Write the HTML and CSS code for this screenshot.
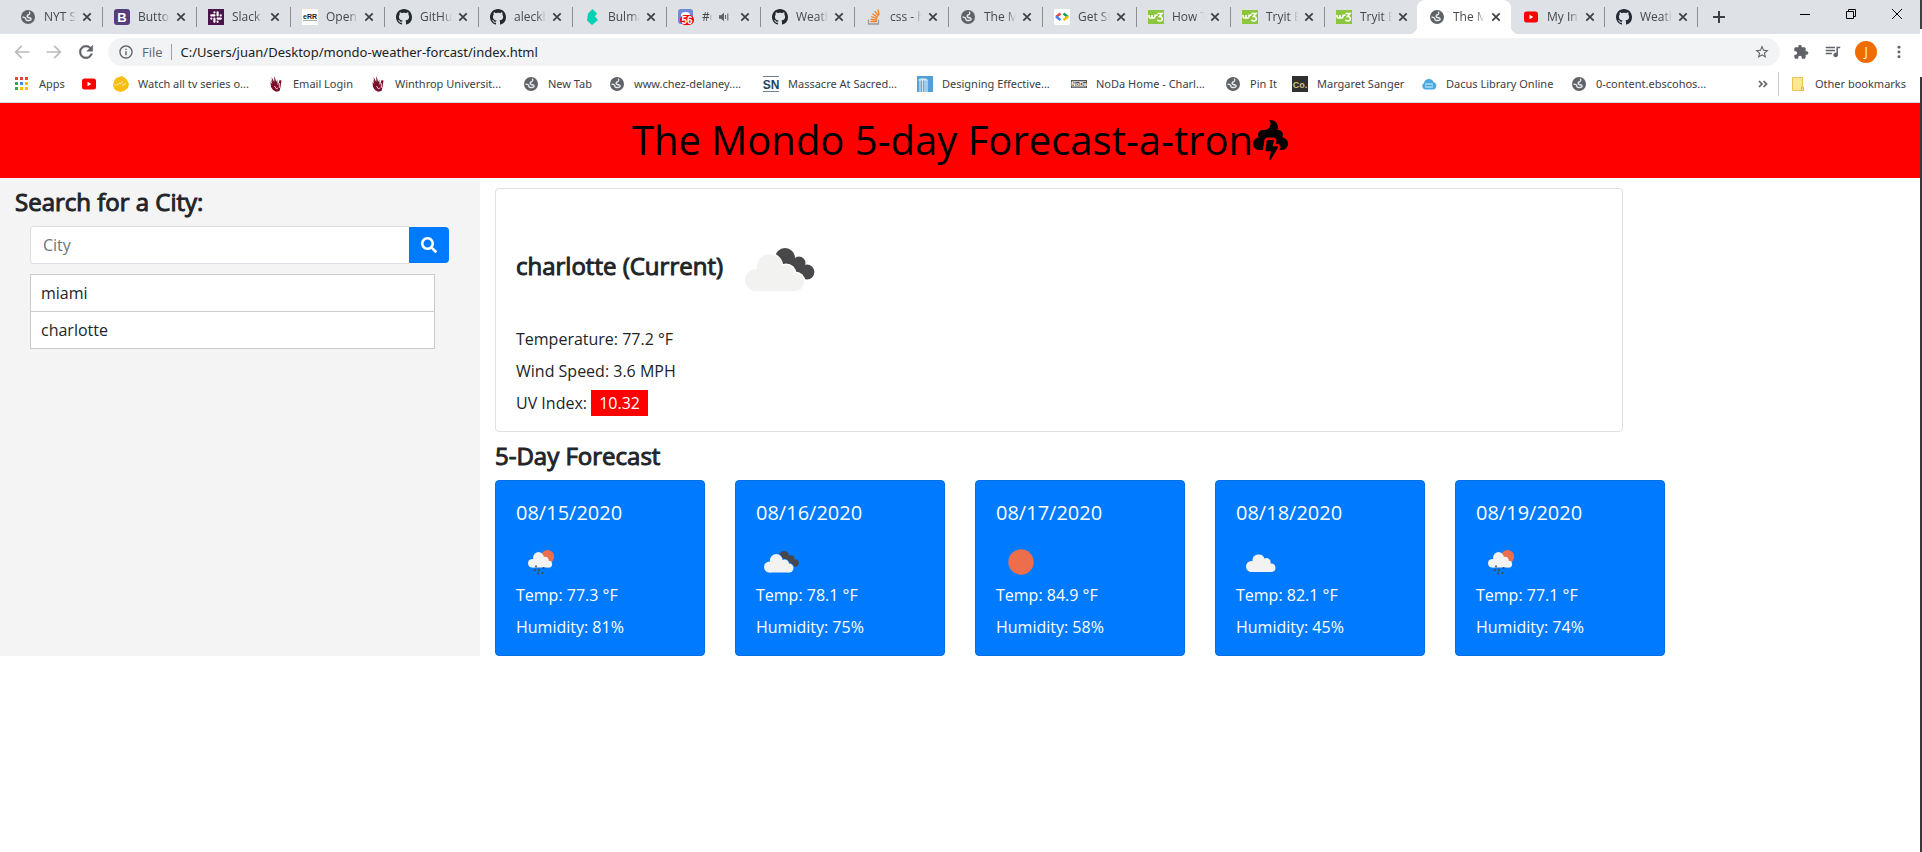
FILE: index.html
```html
<!DOCTYPE html>
<html lang="en">
<head>
<meta charset="utf-8">
<title>The Mondo 5-day Forecast-a-tron</title>
<link rel="stylesheet" href="styles.css">
</head>
<body>
<svg class="sprite" aria-hidden="true">
  <symbol id="globe" viewBox="0 0 16 16"><circle cx="8" cy="8" r="7" fill="#5f6368"/><path d="M2.600 7.800C3.400 8.600 5 8.300 5.600 9.200 6 10 5.600 10.800 6.500 11.200 8 11.600 9.800 11.800 10.800 10.800 11.700 9.800 10.600 8.800 9.300 8.700 8 8.600 7 8 7.200 6.800 7.400 5.600 9 6 9.600 5 9.900 4.200 9.200 3.400 9.800 2.700" fill="none" stroke="#e8eaed" stroke-width="1.400"/></symbol>
  <symbol id="github" viewBox="0 0 16 16"><path fill="#24292e" d="M8 0C3.580 0 0 3.580 0 8c0 3.540 2.290 6.530 5.470 7.590.4.070.55-.17.55-.38 0-.19-.01-.82-.01-1.490-2.010.37-2.530-.49-2.690-.94-.09-.23-.48-.94-.82-1.130-.28-.15-.68-.52-.01-.53.63-.01 1.080.58 1.230.82.72 1.210 1.870.87 2.330.66.070-.52.28-.87.51-1.070-1.780-.2-3.640-.89-3.640-3.950 0-.87.31-1.590.82-2.150-.08-.2-.36-1.020.08-2.120 0 0 .67-.21 2.200.82.64-.18 1.320-.27 2-.27s1.360.09 2 .27c1.530-1.040 2.200-.82 2.200-.82.44 1.100.16 1.920.08 2.120.51.56.82 1.270.82 2.150 0 3.070-1.870 3.750-3.650 3.950.29.25.54.73.54 1.480 0 1.070-.01 1.930-.01 2.200 0 .21.15.46.55.38A8.010 8.010 0 0 0 16 8c0-4.420-3.580-8-8-8z"/></symbol>
  <symbol id="bootstrap" viewBox="0 0 16 16"><rect width="16" height="16" rx="3" fill="#563d7c"/><text x="8" y="13" text-anchor="middle" font-family="Liberation Sans, sans-serif" font-weight="700" font-size="13" fill="#fff">B</text></symbol>
  <symbol id="slack" viewBox="0 0 16 16"><rect width="16" height="16" fill="#4a154b"/><path d="M9.600 3.300v3.100M9.600 9.600h3.200M6.400 9.700v3.100M3.300 6.400h3.100M6.400 3.300v.1M12.700 6.400h.1M9.600 12.700v.1M3.300 9.600h.1" stroke="#fff" stroke-width="2.200" stroke-linecap="round"/></symbol>
  <symbol id="open" viewBox="0 0 16 16"><rect width="16" height="16" fill="#fff"/><text x="8" y="10" text-anchor="middle" font-family="Liberation Sans, sans-serif" font-weight="700" font-size="7" fill="#222">eRR</text><path d="M1 11.500h14" stroke="#aaa"/></symbol>
  <symbol id="bulma" viewBox="0 0 16 16"><path fill="#00d1b2" d="M8.500 0l4.500 4.500-2 3 3 3.500-6 5-5-4.500 1-7z"/></symbol>
  <symbol id="discord" viewBox="0 0 16 16"><rect width="15" height="15" rx="3" fill="#7289da"/><path d="M3 6c0-2 1.500-3 4.500-3S12 4 12 6v3H3z" fill="#fff"/><rect x="2" y="6" width="14" height="10" rx="5" fill="#e00"/><text x="9" y="14.500" text-anchor="middle" font-family="Liberation Sans, sans-serif" font-weight="700" font-size="10" fill="#fff">56</text></symbol>
  <symbol id="stack" viewBox="0 0 16 16"><path d="M2.500 10.500V15h10v-4.500" fill="none" stroke="#9a9c9f" stroke-width="1.300"/><path d="M4.500 12.500h6.500M4.600 10.200l6.400.9M5.200 7.500l6 2.200M6.500 4.800l5.200 3.600M8.800 2.200l3.700 4.900M11.800.5l1.400 5.500" stroke="#f48024" stroke-width="1.300"/></symbol>
  <symbol id="code" viewBox="0 0 16 16"><rect width="16" height="16" rx="2" fill="#fff"/><g fill="none" stroke-width="2.400"><path d="M6.500 4.500L2 8" stroke="#ea4335"/><path d="M2 7.500l4.500 3.500" stroke="#4285f4"/><path d="M9.500 4.500L14 8" stroke="#0f9d58"/><path d="M14 7.500l-4.500 3.500" stroke="#fbbc05"/></g></symbol>
  <symbol id="w3" viewBox="0 0 16 16"><rect y="1" width="16" height="14" fill="#8cc63f"/><path d="M1 6v1.500c0 2 3 2 3 0V6v1.500c0 2 3 2 3 0V6.500l2.500-.5M9.500 4.500h4.500l-2.500 3c4 0 3.500 5 0 4.500-1 0-1.700-.5-2-1.300" fill="none" stroke="#fff" stroke-width="1.600"/></symbol>
  <symbol id="youtube" viewBox="0 0 16 16"><rect x="1" y="2.500" width="14" height="11" rx="2.500" fill="#f00"/><path d="M6.500 5.800v4.400L10.300 8z" fill="#fff"/></symbol>
  <symbol id="speaker" viewBox="0 0 12 12"><path d="M1 4.200h2L6 1.800v8.400L3 7.800H1z" fill="#5f6368"/><path d="M7.500 4v4M9.800 2.500v7" stroke="#5f6368"/></symbol>
  <symbol id="close" viewBox="0 0 10 10"><path d="M1.300 1.300l7.400 7.400M8.700 1.300L1.300 8.700" stroke="#3c4043" stroke-width="1.700"/></symbol>
  <symbol id="apps" viewBox="0 0 16 16"><g fill="#ea4335"><path d="M1 1h3v3H1zM6 1h3v3H6zM11 1h3v3h-3z"/></g><path fill="#34a853" d="M1 6h3v3H1zM1 11h3v3H1z"/><path fill="#4285f4" d="M6 6h3v3H6z"/><path fill="#fbbc05" d="M11 6h3v3h-3zM6 11h3v3H6zM11 11h3v3h-3z"/></symbol>
  <symbol id="watch" viewBox="0 0 16 16"><path d="M3 2l3-1 3-1 3 2 2 2 2 4-1 4-4 3-4 1-5-2-2-4 1-5z" fill="#f9bd0c"/><path d="M1.500 8.500c1 2 2-.5 2.500 0s1.500 0 2-1 1 1 2 0 1-2 2-2M9 9c1 1 2-2 4-1" fill="none" stroke="#fff" stroke-width=".8"/></symbol>
  <symbol id="eagle" viewBox="0 0 16 16"><path fill="#7b0f2b" d="M2.500 3l1.800 3-.8-5 2.800 5V0l2 6 .9-2.500.6 6L11.600 4l1.900.5-1 6.500-1 4-3.500.8-3-1.800-2-3-.5-5 1.800 2z"/><path d="M6.500 10l1.800 2.800 1.700-.8M11.300 7v5" fill="none" stroke="#fff" stroke-width=".8"/></symbol>
  <symbol id="sn" viewBox="0 0 16 16"><path d="M0 .5h16M0 15.500h16" stroke="#6c8196"/><text x="8" y="12.500" text-anchor="middle" font-family="Liberation Sans, sans-serif" font-weight="700" font-size="12" fill="#1d3f63">SN</text></symbol>
  <symbol id="design" viewBox="0 0 16 16"><rect width="16" height="16" fill="#559fd6"/><path d="M1 4.500c1-3 9-3 10 0z" fill="#d5e9f5"/><path d="M3 4v12M5.500 4v12M8 4v12M10 4v12" stroke="#d5e9f5" stroke-width="1.200"/></symbol>
  <symbol id="noda" viewBox="0 0 16 16"><rect y="4" width="16" height="8" fill="#555"/><path d="M1 5.500h14M1 10.800h14" stroke="#ddd" stroke-width=".8"/><text x="8" y="10.200" text-anchor="middle" font-family="Liberation Sans, sans-serif" font-weight="700" font-size="6" fill="#fff">NoDa</text></symbol>
  <symbol id="co" viewBox="0 0 16 16"><rect width="16" height="16" fill="#2f2f2f"/><text x="8" y="12" text-anchor="middle" font-family="Liberation Sans, sans-serif" font-size="9" font-weight="700" fill="#d9c37e">Co.</text></symbol>
  <symbol id="dacus" viewBox="0 0 16 16"><path fill="#4aa8df" d="M4 13.500a3.500 3.500 0 0 1-1-6.500 5 5 0 0 1 9.500-1 4 4 0 0 1 .5 7.500z"/><rect x="4" y="7" width="8" height="5" rx="1" fill="#8fd0f0"/><path d="M5 9.500h6" stroke="#4aa8df"/></symbol>
  <symbol id="folder" viewBox="0 0 16 16"><path d="M2.500 1.500h10v11h1v2h-11z" fill="#ffe693" stroke="#eac54f"/><path d="M11.500 11h2v3.500h-2z" fill="#ffe693" stroke="#e3b93a"/></symbol>

  <symbol id="broken" viewBox="0 0 100 100">
    <g fill="#48484a"><circle cx="56" cy="38" r="10"/><circle cx="70" cy="43" r="6.500"/><circle cx="78" cy="52" r="7.400"/><path d="M56 48l10-9 10 7 0 13-8-2z"/></g>
    <g class="cloud-gap"><circle cx="40" cy="47" r="14.400"/><circle cx="57" cy="54" r="10.500"/><circle cx="66" cy="62" r="10.500"/></g>
    <g fill="#f2f2f0"><circle cx="27" cy="60" r="11"/><circle cx="40.500" cy="47" r="12.800"/><circle cx="57" cy="54" r="9"/><circle cx="66" cy="62" r="9"/><path d="M27 55l20-5 19 8v13H27z"/></g>
  </symbol>
  <symbol id="rain" viewBox="0 0 50 46">
    <circle cx="31.500" cy="19.700" r="6.700" fill="#ec6e4c"/>
    <g fill="#f2f2f2"><circle cx="16.300" cy="26.300" r="4.300"/><circle cx="22.500" cy="20.500" r="5.400"/><circle cx="29" cy="23.500" r="3.700"/><circle cx="32.700" cy="27.200" r="3.400"/><path d="M16.300 24l8-2 8 3v5.600h-16z"/></g>
    <path d="M20 28.500v1.800M19.500 32l-1.300 2.300M23.500 32l-1.300 2.300M27.600 30v2M27 35l-1 2M22.500 35.500l-1 2" stroke="#48484a" stroke-width="1.600"/>
  </symbol>
  <symbol id="sun" viewBox="0 0 50 46"><circle cx="25" cy="25" r="12.700" fill="#ec6e4c"/></symbol>
  <symbol id="cloud" viewBox="0 0 50 46"><path fill="#f2f2f2" d="M15.500 35a5.400 5.400 0 0 1 0-11h1a6.200 6.200 0 0 1 12-2.500 4.300 4.300 0 0 1 6 5 4.300 4.300 0 0 1 1.300 8.500z"/></symbol>
</svg>

<div class="window">
  <div class="browser">
    <div class="tabstrip">
      <div class="tabs">
        <div class="tab"><svg class="ico"><use href="#globe"/></svg><span class="tab-title">NYT S</span><button class="tab-close" aria-label="Close tab"><svg><use href="#close"/></svg></button></div>
        <div class="tab"><svg class="ico"><use href="#bootstrap"/></svg><span class="tab-title">Butto</span><button class="tab-close" aria-label="Close tab"><svg><use href="#close"/></svg></button></div>
        <div class="tab"><svg class="ico"><use href="#slack"/></svg><span class="tab-title">Slack</span><button class="tab-close" aria-label="Close tab"><svg><use href="#close"/></svg></button></div>
        <div class="tab"><svg class="ico"><use href="#open"/></svg><span class="tab-title">Open</span><button class="tab-close" aria-label="Close tab"><svg><use href="#close"/></svg></button></div>
        <div class="tab"><svg class="ico"><use href="#github"/></svg><span class="tab-title">GitHu</span><button class="tab-close" aria-label="Close tab"><svg><use href="#close"/></svg></button></div>
        <div class="tab"><svg class="ico"><use href="#github"/></svg><span class="tab-title">aleckb</span><button class="tab-close" aria-label="Close tab"><svg><use href="#close"/></svg></button></div>
        <div class="tab"><svg class="ico"><use href="#bulma"/></svg><span class="tab-title">Bulma</span><button class="tab-close" aria-label="Close tab"><svg><use href="#close"/></svg></button></div>
        <div class="tab"><svg class="ico"><use href="#discord"/></svg><span class="tab-title audible">#c</span><svg class="speaker"><use href="#speaker"/></svg><button class="tab-close" aria-label="Close tab"><svg><use href="#close"/></svg></button></div>
        <div class="tab"><svg class="ico"><use href="#github"/></svg><span class="tab-title">Weath</span><button class="tab-close" aria-label="Close tab"><svg><use href="#close"/></svg></button></div>
        <div class="tab"><svg class="ico"><use href="#stack"/></svg><span class="tab-title">css - h</span><button class="tab-close" aria-label="Close tab"><svg><use href="#close"/></svg></button></div>
        <div class="tab"><svg class="ico"><use href="#globe"/></svg><span class="tab-title">The M</span><button class="tab-close" aria-label="Close tab"><svg><use href="#close"/></svg></button></div>
        <div class="tab"><svg class="ico"><use href="#code"/></svg><span class="tab-title">Get St</span><button class="tab-close" aria-label="Close tab"><svg><use href="#close"/></svg></button></div>
        <div class="tab"><svg class="ico"><use href="#w3"/></svg><span class="tab-title">How T</span><button class="tab-close" aria-label="Close tab"><svg><use href="#close"/></svg></button></div>
        <div class="tab"><svg class="ico"><use href="#w3"/></svg><span class="tab-title">Tryit E</span><button class="tab-close" aria-label="Close tab"><svg><use href="#close"/></svg></button></div>
        <div class="tab before-active"><svg class="ico"><use href="#w3"/></svg><span class="tab-title">Tryit E</span><button class="tab-close" aria-label="Close tab"><svg><use href="#close"/></svg></button></div>
        <div class="tab active"><svg class="ico"><use href="#globe"/></svg><span class="tab-title">The M</span><button class="tab-close" aria-label="Close tab"><svg><use href="#close"/></svg></button></div>
        <div class="tab"><svg class="ico"><use href="#youtube"/></svg><span class="tab-title">My In</span><button class="tab-close" aria-label="Close tab"><svg><use href="#close"/></svg></button></div>
        <div class="tab"><svg class="ico"><use href="#github"/></svg><span class="tab-title">Weath</span><button class="tab-close" aria-label="Close tab"><svg><use href="#close"/></svg></button></div>
        <button class="new-tab" aria-label="New tab"><svg viewBox="0 0 12 12"><path d="M6 0v12M0 6h12" stroke="#3c4043" stroke-width="2"/></svg></button>
      </div>
      <div class="window-controls">
        <button aria-label="Minimize"><svg viewBox="0 0 12 12"><path d="M1 6.500h10" stroke="#000"/></svg></button>
        <button aria-label="Restore"><svg viewBox="0 0 12 12"><path d="M1.500 3.500h7v7h-7zM3.500 3V1.500h7v7H9" fill="none" stroke="#000"/></svg></button>
        <button aria-label="Close"><svg viewBox="0 0 12 12"><path d="M1 1l10 10M11 1L1 11" stroke="#000"/></svg></button>
      </div>
    </div>

    <div class="toolbar">
      <button class="nav-btn off" aria-label="Back"><svg viewBox="0 0 24 24"><path d="M21 11H6.800l5.600-5.600L11 4l-8 8 8 8 1.400-1.400L6.800 13H21z"/></svg></button>
      <button class="nav-btn off" aria-label="Forward"><svg viewBox="0 0 24 24"><path d="M3 11h14.200l-5.600-5.600L13 4l8 8-8 8-1.400-1.400 5.600-5.600H3z"/></svg></button>
      <button class="nav-btn" aria-label="Reload"><svg viewBox="0 0 24 24"><path d="M17.650 6.350C16.200 4.900 14.210 4 12 4c-4.420 0-7.990 3.580-7.990 8s3.570 8 7.990 8c3.730 0 6.840-2.550 7.730-6h-2.080c-.82 2.330-3.040 4-5.650 4-3.310 0-6-2.690-6-6s2.690-6 6-6c1.660 0 3.140.69 4.220 1.780L13 11h7V4l-2.350 2.350z" stroke="#5f6368" stroke-width=".6"/></svg></button>
      <div class="omnibox">
        <svg class="info" viewBox="0 0 24 24"><path d="M11 17h2v-6h-2v6zm1-15C6.480 2 2 6.480 2 12s4.480 10 10 10 10-4.480 10-10S17.520 2 12 2zm0 18c-4.410 0-8-3.590-8-8s3.590-8 8-8 8 3.590 8 8-3.590 8-8 8zM11 9h2V7h-2v2z"/></svg>
        <label class="scheme" for="url">File</label>
        <input id="url" class="url" type="text" value="C:/Users/juan/Desktop/mondo-weather-forcast/index.html">
        <button class="star" aria-label="Bookmark this page"><svg viewBox="0 0 24 24"><path d="M22 9.240l-7.190-.62L12 2 9.190 8.630 2 9.240l5.460 4.730L5.820 21 12 17.270 18.180 21l-1.630-7.030L22 9.240zM12 15.400l-3.760 2.270 1-4.280-3.320-2.880 4.380-.38L12 6.100l1.710 4.040 4.380.38-3.320 2.880 1 4.280L12 15.400z"/></svg></button>
      </div>
      <button class="tool" aria-label="Extensions"><svg viewBox="0 0 24 24"><path d="M20.500 11H19V7c0-1.100-.9-2-2-2h-4V3.500C13 2.120 11.880 1 10.500 1S8 2.120 8 3.500V5H4c-1.100 0-1.990.9-1.990 2v3.800H3.500c1.490 0 2.700 1.210 2.700 2.700s-1.210 2.700-2.700 2.700H2V20c0 1.100.9 2 2 2h3.800v-1.500c0-1.490 1.210-2.700 2.700-2.700s2.700 1.210 2.700 2.700V22H17c1.100 0 2-.9 2-2v-4h1.500c1.380 0 2.500-1.120 2.500-2.500S21.880 11 20.500 11z"/></svg></button>
      <button class="tool" aria-label="Media"><svg viewBox="2 3 21 20"><path d="M15 6H3v2h12V6zm0 4H3v2h12v-2zM3 16h8v-2H3v2zM17 6v8.180c-.31-.11-.65-.18-1-.18-1.660 0-3 1.340-3 3s1.340 3 3 3 3-1.340 3-3V8h3V6h-5z"/></svg></button>
      <button class="avatar" aria-label="Profile">J</button>
      <button class="tool" aria-label="Menu"><svg viewBox="0 0 24 24"><circle cx="12" cy="5" r="2.200"/><circle cx="12" cy="12" r="2.200"/><circle cx="12" cy="19" r="2.200"/></svg></button>
    </div>

    <nav class="bookmarks">
      <a href="#"><svg class="ico"><use href="#apps"/></svg>Apps</a>
      <a href="#" aria-label="YouTube"><svg class="ico"><use href="#youtube"/></svg></a>
      <a href="#"><svg class="ico"><use href="#watch"/></svg>Watch all tv series o...</a>
      <a href="#"><svg class="ico"><use href="#eagle"/></svg>Email Login</a>
      <a href="#"><svg class="ico"><use href="#eagle"/></svg>Winthrop Universit...</a>
      <a href="#"><svg class="ico"><use href="#globe"/></svg>New Tab</a>
      <a href="#"><svg class="ico"><use href="#globe"/></svg>www.chez-delaney....</a>
      <a href="#"><svg class="ico"><use href="#sn"/></svg>Massacre At Sacred...</a>
      <a href="#"><svg class="ico"><use href="#design"/></svg>Designing Effective...</a>
      <a href="#"><svg class="ico"><use href="#noda"/></svg>NoDa Home - Charl...</a>
      <a href="#"><svg class="ico"><use href="#globe"/></svg>Pin It</a>
      <a href="#"><svg class="ico"><use href="#co"/></svg>Margaret Sanger</a>
      <a href="#"><svg class="ico"><use href="#dacus"/></svg>Dacus Library Online</a>
      <a href="#"><svg class="ico"><use href="#globe"/></svg>0-content.ebscohos...</a>
      <div class="bookmarks-end">
        <button class="overflow" aria-label="More bookmarks"><svg viewBox="0 0 10 8"><path d="M1 1l3 3-3 3M5.500 1l3 3-3 3" fill="none" stroke="#5f6368" stroke-width="1.700"/></svg></button>
        <a href="#" class="other"><svg class="ico"><use href="#folder"/></svg>Other bookmarks</a>
      </div>
    </nav>

    <header class="banner">
      <h1>The Mondo 5-day Forecast-a-tron<svg class="storm" viewBox="0 0 448 512"><path d="M308 336h-57.700l17.300-64.900c2-7.600-3.700-15.100-11.600-15.100h-68c-6 0-11.100 4.500-11.900 10.400l-16 120c-1 7.200 4.600 13.600 11.900 13.600h59.300l-23 97.200c-1.800 7.600 4 14.800 11.700 14.800 4.200 0 8.200-2.200 10.400-6l88-152c4.600-8-1.200-18-10.400-18zm66.400-111.300c5.900-9.600 9.600-20.600 9.600-32.700 0-35.300-28.700-64-64-64h-5.900c3.600-10.100 5.900-20.700 5.900-32 0-53-43-96-96-96-5.200 0-10.200.7-15.100 1.500C218.300 14.400 224 30.600 224 48c0 44.200-35.800 80-80 80h-16c-35.300 0-64 28.700-64 64 0 12.100 3.700 23.100 9.600 32.700C32.600 228 0 262.200 0 304c0 44 36 80 80 80h48.300c.1-.6 0-1.200 0-1.800l16-120c3-21.800 21.700-38.200 43.700-38.200h68c13.800 0 26.500 6.300 34.900 17.200s11.200 24.800 7.600 38.100l-6.600 24.700h16c15.700 0 30.300 8.400 38.100 22 7.800 13.600 7.800 30.500 0 44l-8.100 14h30c44 0 80-36 80-80 .1-41.800-32.500-76-73.500-79.300z"/></svg></h1>
    </header>

    <main class="layout">
      <aside class="sidebar">
        <h3><label for="city">Search for a City:</label></h3>
        <form class="search">
          <input id="city" type="text" placeholder="City">
          <button type="button" aria-label="Search"><svg viewBox="0 0 512 512"><path fill="#fff" d="M505 442.700L405.300 343c-4.500-4.500-10.600-7-17-7H372c27.600-35.300 44-79.700 44-128C416 93.100 322.900 0 208 0S0 93.100 0 208s93.100 208 208 208c48.300 0 92.700-16.400 128-44v16.300c0 6.400 2.500 12.500 7 17l99.700 99.700c9.400 9.400 24.600 9.400 33.900 0l28.300-28.300c9.400-9.400 9.400-24.600.1-34zM208 336c-70.700 0-128-57.200-128-128 0-70.700 57.200-128 128-128 70.700 0 128 57.200 128 128 0 70.700-57.200 128-128 128z"/></svg></button>
        </form>
        <ul class="history">
          <li>miami</li>
          <li>charlotte</li>
        </ul>
      </aside>

      <div class="content">
        <section class="current">
          <h3><span class="place">charlotte (Current)</span><svg class="current-icon"><use href="#broken"/></svg></h3>
          <p>Temperature: 77.2 °F</p>
          <p>Wind Speed: 3.6 MPH</p>
          <p>UV Index: <span class="uv">10.32</span></p>
        </section>

        <h3 class="forecast-title">5-Day Forecast</h3>
        <section class="forecast">
          <article class="day"><h5>08/15/2020</h5><svg class="day-icon"><use href="#rain"/></svg><p>Temp: 77.3 °F</p><p>Humidity: 81%</p></article>
          <article class="day"><h5>08/16/2020</h5><svg class="day-icon" viewBox="0 0 100 92"><use href="#broken" width="100" height="100"/></svg><p>Temp: 78.1 °F</p><p>Humidity: 75%</p></article>
          <article class="day"><h5>08/17/2020</h5><svg class="day-icon"><use href="#sun"/></svg><p>Temp: 84.9 °F</p><p>Humidity: 58%</p></article>
          <article class="day"><h5>08/18/2020</h5><svg class="day-icon"><use href="#cloud"/></svg><p>Temp: 82.1 °F</p><p>Humidity: 45%</p></article>
          <article class="day"><h5>08/19/2020</h5><svg class="day-icon"><use href="#rain"/></svg><p>Temp: 77.1 °F</p><p>Humidity: 74%</p></article>
        </section>
      </div>
    </main>
  </div>
  <div class="edge"></div>
</div>
</body>
</html>
```

FILE: styles.css
```css
*, *::before, *::after { box-sizing: border-box; }

body {
  margin: 0;
  background: #fff;
  color: #212529;
  font: 16px/24px "Open Sans", "Noto Sans", sans-serif;
}

h1, h3, h5, p, ul { margin: 0; padding: 0; }
button { border: 0; padding: 0; background: none; font: inherit; display: flex; align-items: center; justify-content: center; }
a { color: inherit; text-decoration: none; }
svg { display: block; flex: none; }
.sprite { display: none; }
.ico { width: 16px; height: 16px; }

.window { display: flex; min-height: 100vh; }
.browser { flex: 1; min-width: 0; }
.edge { width: 2px; background: linear-gradient(#3c4043 29px, #fff 29px, #fff 77px, #36383b 77px); }

/* Tab strip */
.tabstrip { display: flex; justify-content: space-between; height: 34px; padding-left: 8px; background: #dee1e6; }
.tabs { display: flex; min-width: 0; }
.tab {
  position: relative;
  display: flex;
  align-items: center;
  width: 94px;
  padding-left: 12px;
  font-size: 12px;
  color: #45494d;
}
.tab.active ~ .tab { width: 93px; }
.tab::after { content: ""; position: absolute; right: -1px; top: 7px; width: 1px; height: 20px; background: #8a8d91; }
.tab.active::after, .tab.before-active::after { display: none; }
.tab.before-active { width: 93px; }
.tab.active { background: #fff; border-radius: 8px 8px 0 0; }
.tab.active::before {
  content: "";
  position: absolute;
  left: -8px;
  right: -8px;
  bottom: 0;
  height: 8px;
  background:
    radial-gradient(circle at 0 0, transparent 8px, #fff 8px) left / 8px 8px no-repeat,
    radial-gradient(circle at 100% 0, transparent 8px, #fff 8px) right / 8px 8px no-repeat;
}
.tab-title {
  width: 32px;
  margin: 0 6px 0 8px;
  overflow: hidden;
  white-space: nowrap;
  -webkit-mask-image: linear-gradient(90deg, #000 70%, transparent);
  mask-image: linear-gradient(90deg, #000 70%, transparent);
}
.tab-title.audible { width: 10px; }
.speaker { width: 12px; height: 12px; margin-right: 10px; }
.tab-close svg { width: 10px; height: 10px; }
.new-tab { width: 44px; }
.new-tab svg { width: 12px; height: 12px; }
.window-controls { display: flex; height: 28px; }
.window-controls button { width: 46px; }
.window-controls svg { width: 12px; height: 12px; }

/* Toolbar */
.toolbar { display: flex; align-items: center; height: 36px; padding: 0 11px 0 6px; fill: #5f6368; }
.nav-btn { width: 32px; }
.nav-btn svg { width: 20px; height: 20px; }
.nav-btn.off { fill: #babcbe; }
.omnibox {
  flex: 1;
  display: flex;
  align-items: center;
  height: 28px;
  margin: 0 11px 0 6px;
  padding: 0 10px;
  border-radius: 14px;
  background: #f1f3f4;
}
.info { width: 16px; height: 16px; }
.scheme { margin-left: 8px; padding-right: 8px; border-right: 1px solid #9aa0a6; font-size: 13px; line-height: 16px; color: #5f6368; }
.url { flex: 1; min-width: 0; margin-left: 9px; padding: 0; border: 0; background: none; font: 13px/20px "Noto Sans", "Open Sans", sans-serif; color: #202124; }
.star svg { width: 16px; height: 16px; }
.tool { width: 20px; margin-right: 12px; }
.tool svg { width: 16px; height: 16px; }
.tool:last-child { margin-right: 0; }
.avatar { width: 22px; height: 22px; margin-right: 12px; border-radius: 50%; background: #ef6c00; color: #fff; font-size: 12px; }

/* Bookmarks bar */
.bookmarks {
  display: grid;
  grid-template-columns: 67px 32px 155px 102px 153px 86px 154px 154px 154px 154px 67px 129px 150px 160px 1fr;
  align-items: center;
  height: 33px;
  padding: 0 14px 4px;
  border-bottom: 1px solid #d5d8dc;
  font-family: "Noto Sans", "Open Sans", sans-serif;
  font-size: 11px;
  color: #3c4043;
}
.bookmarks a { display: flex; align-items: center; gap: 9px; white-space: nowrap; }
.bookmarks-end { display: flex; justify-content: flex-end; align-items: center; gap: 10px; }
.overflow svg { width: 10px; height: 8px; }
.bookmarks .other { padding-left: 11px; border-left: 1px solid #c4c7cb; }

/* Page banner */
.banner { display: flex; justify-content: center; padding: 13px 16px 14px; background: #f00; color: #000; }
.banner h1 { display: flex; align-items: center; font-size: 40px; font-weight: 400; line-height: 48px; }
.storm { width: 35px; height: 40px; }

/* Dashboard */
.layout { display: grid; grid-template-columns: 1fr 3fr; }
.sidebar { padding: 9px 15px; background: #f4f4f4; }
h3 { font-size: 24px; font-weight: 400; line-height: 29px; -webkit-text-stroke: 1px currentColor; }
.search { display: flex; margin: 10px 16px 10px 15px; }
.search input {
  flex: 1;
  min-width: 0;
  height: 38px;
  padding: 0 12px;
  border: 1px solid #dcdfe3;
  border-right: 0;
  border-radius: 4px 0 0 4px;
  background: #fff;
  font: 16px/24px "Open Sans", "Noto Sans", sans-serif;
  color: #495057;
}
.search input::placeholder { color: #6c757d; opacity: 1; }
.search button { width: 40px; margin: 1px 0; border-radius: 0 4px 4px 0; background: #007bff; }
.search svg { width: 16px; height: 16px; }
.history { margin: 0 30px 0 15px; list-style: none; border: 1px solid #ccc; background: #fff; }
.history li { padding: 6px 10px; }
.history li + li { border-top: 1px solid #ccc; }

.content { padding: 10px 15px 0; }
.current { --gap: #fff; width: 80%; padding: 31px 20px 16px; border: 1px solid #dfdfdf; border-radius: 4px; }
.current h3 { display: flex; align-items: center; gap: 6px; margin-bottom: 7px; }
.place { padding-bottom: 10px; }
.current-icon { width: 100px; height: 100px; }
.cloud-gap { fill: var(--gap); }
.current p + p { margin-top: 8px; }
.uv { padding: 2px 8px; background: #f00; color: #fff; }
.forecast-title { margin: 9px 0; line-height: 30px; }
.forecast { display: grid; grid-template-columns: repeat(6, 1fr); gap: 30px; }
.day { --gap: #007bff; padding: 20px 20px 16px; border: 1px solid #006fe6; border-radius: 4px; background: #007bff; color: #fff; }
.day h5 { margin-bottom: 12px; font-size: 20px; font-weight: 400; line-height: 24px; }
.day-icon { width: 50px; height: 46px; }
.day p + p { margin-top: 8px; }
```
